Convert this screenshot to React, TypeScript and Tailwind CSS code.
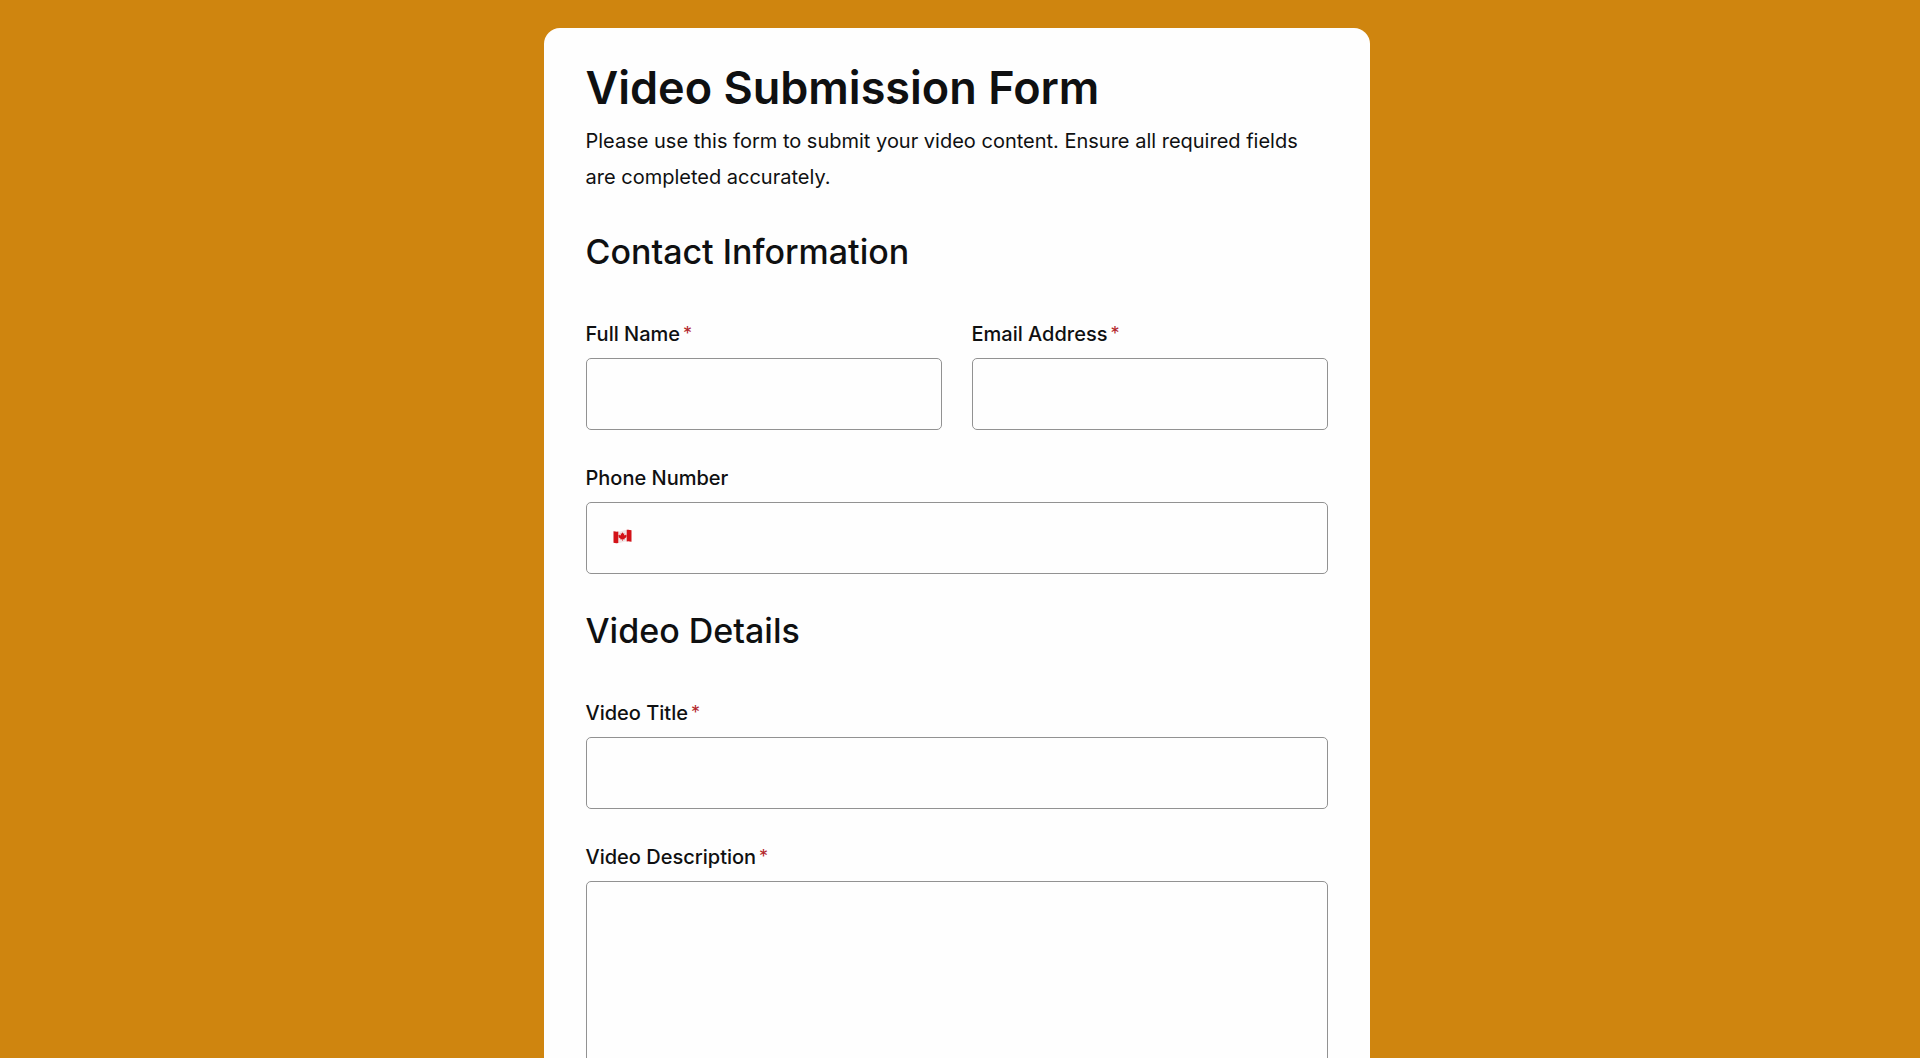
import type { ReactNode } from "react";

const control =
  "block w-full rounded-[5px] border border-[#929292] bg-[#fefefe] px-7 text-xl text-[#0f1011] outline-none focus:border-[#cf850f]";

function Field({
  id,
  label,
  required = false,
  children,
}: {
  id: string;
  label: string;
  required?: boolean;
  children: ReactNode;
}) {
  return (
    <div className="min-w-0">
      <label htmlFor={id} className="mb-2 flex items-start gap-[3px] text-xl leading-8 font-medium">
        {label}
        {required && <span className="text-lg leading-8 font-normal text-[#b3262b]">*</span>}
      </label>
      {children}
    </div>
  );
}

function SectionTitle({ children }: { children: ReactNode }) {
  return <h2 className="mt-[33px] text-[34px] leading-12 font-medium">{children}</h2>;
}

function CanadaFlag() {
  return (
    <svg viewBox="0 0 36 28" className="h-[15px] w-[19px]" aria-hidden="true">
      <path d="M1 4 Q10 6 18 3 T35 2 V24 Q27 22 18 25 T1 26 Z" fill="#f1e6e6" />
      <path d="M1 4 Q5.500 5.300 10 4.700 V26.400 Q5 27 1 26 Z" fill="#d31218" />
      <path d="M26 1.300 Q31 .8 35 2 V24 Q31 22.800 26 23.300 Z" fill="#d31218" />
      <path
        d="M18 6 l1.700 3 1.800-1 -.8 4.500 2.400-2.500 .6 1.400 2.300-.5 -1 2.800 1 .8 -4.500 3.700 .4 1.500 -3.400-.5 v3.500 h-1 v-3.500 l-3.400 .7 .4-1.500 -4.500-3.500 1-.9 -1-2.700 2.300 .3 .6-1.400 2.400 2.300 -.8-4.500 1.800 .8 Z"
        fill="#d31218"
      />
    </svg>
  );
}

export default function App() {
  return (
    <main className="h-screen overflow-y-auto bg-[#cf850f] py-7 pr-[23px] pl-4 [scrollbar-width:none]">
      <form className="mx-auto w-full max-w-[826px] rounded-2xl bg-[#fefefe] px-[42px] pt-8 pb-10 font-['Inter',sans-serif] text-[#0f1011]">
        <h1 className="text-[45px] leading-14 font-semibold">Video Submission Form</h1>
        <p className="mt-[7px] text-xl leading-9">
          Please use this form to submit your video content. Ensure all required fields are completed accurately.
        </p>

        <SectionTitle>Contact Information</SectionTitle>
        <div className="mt-[42px] grid grid-cols-2 gap-x-[30px] gap-y-8">
          <Field id="full-name" label="Full Name" required>
            <input id="full-name" type="text" required className={`${control} h-[72px]`} />
          </Field>
          <Field id="email" label="Email Address" required>
            <input id="email" type="email" required className={`${control} h-[72px]`} />
          </Field>
          <div className="col-span-2">
            <Field id="phone" label="Phone Number">
              <div className="flex h-[72px] items-center rounded-[5px] border border-[#929292] bg-[#fefefe] pb-1 pl-[26px]">
                <button type="button" aria-label="Country: Canada" className="shrink-0">
                  <CanadaFlag />
                </button>
                <input id="phone" type="tel" className="h-full min-w-0 flex-1 bg-transparent px-4 text-xl outline-none" />
              </div>
            </Field>
          </div>
        </div>

        <SectionTitle>Video Details</SectionTitle>
        <div className="mt-[42px] grid gap-8">
          <Field id="video-title" label="Video Title" required>
            <input id="video-title" type="text" required className={`${control} h-[72px]`} />
          </Field>
          <Field id="video-description" label="Video Description" required>
            <textarea id="video-description" required rows={8} className={`${control} resize-none py-5`} />
          </Field>
        </div>
      </form>
    </main>
  );
}
